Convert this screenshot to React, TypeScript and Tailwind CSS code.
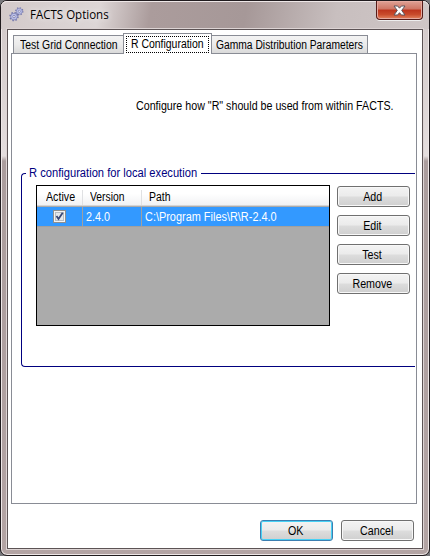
import React from "react";

function Label({ children, className = "" }: { children: React.ReactNode; className?: string }) {
  return <span className={`inline-block whitespace-pre ${className}`}>{children}</span>;
}

function Button({ children, primary = false }: { children: React.ReactNode; primary?: boolean }) {
  return (
    <button
      className={`flex h-[21px] w-[73px] items-center justify-center rounded-[3px] border bg-[linear-gradient(#f3f3f3_0%,#ebebeb_49%,#dddddd_51%,#cfcfcf_100%)] pr-[2px] ${
        primary
          ? "border-[#3c7fb1] shadow-[inset_0_0_0_1px_#48d1f5]"
          : "border-[#707070] shadow-[inset_0_0_0_1px_#f8f8f8]"
      }`}
    >
      <Label className="scale-x-[0.89]">{children}</Label>
    </button>
  );
}

function Gear({ x, y, s }: { x: number; y: number; s: number }) {
  return (
    <g transform={`translate(${x} ${y}) scale(${s})`}>
      <circle r="4.2" fill="none" stroke="#7276ac" strokeWidth="1.8" strokeDasharray="1.6 1.7" />
      <circle r="3.6" fill="#bcc0e8" stroke="#7276ac" strokeWidth="0.7" />
      <circle r="1.3" fill="#f1edf3" stroke="#666aa0" strokeWidth="0.7" />
    </g>
  );
}

export default function App() {
  return (
    <div className="h-[556px] w-[430px] overflow-hidden bg-[#77777b] font-['Liberation_Sans',Arial,sans-serif] text-[12px] leading-[14px] text-black">
      <div className="flex h-full flex-col rounded-[7px] border border-[#201b1e] bg-[linear-gradient(to_bottom,#d0c7c7_0px,#e4dddd_155px,#ab9d9d_160px,#b3a4a4_100%)] shadow-[inset_0_0_0_1px_#eee7e7]">
        <header className="flex h-[28px] shrink-0 justify-between rounded-t-[6px] bg-[linear-gradient(100deg,#d3caca_0%,#ddd6d6_23%,#ab9c9c_35%,#a69898_57%,#c8bfbf_78%,#cfc6c6_100%)] pl-[8px] pr-[6px] shadow-[inset_0_1px_0_#eee7e7]">
          <div className="flex items-start">
            <svg className="mt-[6px] h-[15px] w-[15px]" viewBox="0 0 15 15">
              <Gear x={10.3} y={4.3} s={0.82} />
              <Gear x={5} y={9.6} s={0.93} />
            </svg>
            <Label className="ml-[6px] mt-[6px] origin-left scale-x-[0.96] font-['Open_Sans','Noto_Sans',sans-serif] leading-[16px] [text-shadow:0_0_7px_#fff]">FACTS Options</Label>
          </div>
          <button className="flex h-[19px] w-[47px] items-center justify-center rounded-b-[4px] border border-t-0 border-[#551b18] bg-[linear-gradient(#dfa296_0%,#ce7564_45%,#bd341d_50%,#c94b2c_75%,#e38561_100%)] shadow-[inset_0_0_0_1px_#e6aaa0,0_1px_0_#eee]">
            <svg className="h-[11px] w-[13px]" viewBox="0 0 13 11">
              <path d="M1 1H4.6L6.5 3.2L8.4 1H12L8.7 5.4L12 10H8.4L6.5 7.7L4.6 10H1L4.3 5.4Z" fill="#fff" stroke="#5b565f" strokeWidth="1" />
            </svg>
          </button>
        </header>
        <main className="mx-[6px] mb-[6px] flex min-h-0 flex-1 flex-col border border-[#5c5355] bg-white pl-[3px] pr-[5px] pt-[3px] shadow-[0_0_0_1px_#ddd4d4]">
          <nav className="z-10 -mb-px flex h-[21px] items-end pl-[2px]">
            <div className="h-[19px] w-[111px] border border-[#898c95] bg-gradient-to-b from-[#f3f3f3] via-[#ebebeb] to-[#dadada] pl-[6px] pt-[2px]">
              <Label className="origin-left scale-x-[0.87]">Test Grid Connection</Label>
            </div>
            <div className="-ml-px h-[21px] w-[89px] border border-b-0 border-[#898c95] bg-white p-[2px]">
              <div className="h-[17px] w-[83px] border border-dotted border-black pl-[4px]">
                <Label className="origin-left scale-x-[0.87]">R Configuration</Label>
              </div>
            </div>
            <div className="-ml-px h-[19px] w-[157px] border border-[#898c95] bg-gradient-to-b from-[#f3f3f3] via-[#ebebeb] to-[#dadada] pl-[4px] pt-[2px]">
              <Label className="origin-left scale-x-[0.857]">Gamma Distribution Parameters</Label>
            </div>
          </nav>
          <section className="h-[451px] w-[406px] border border-[#898c95] pt-[45px]">
            <Label className="ml-[124px] origin-left scale-x-[0.89]">Configure how "R" should be used from within FACTS.</Label>
            <div className="relative ml-[9px] mt-[60px] h-[194px] w-[394px] rounded-l-[4px] border border-r-0 border-[#00007f]">
              <div className="absolute left-[4px] top-[-8px] w-[175px] bg-white pl-[3px] leading-[14px] text-[#00007f]">
                <Label className="origin-left scale-x-[0.93]">R configuration for local execution</Label>
              </div>
              <div className="flex gap-[7px] pl-[14px] pt-[11px]">
                <div className="h-[141px] w-[294px] border border-black bg-[#ababab]">
                  <div className="flex h-[20px] border-b border-[#d5d5d5] bg-gradient-to-b from-white from-40% to-[#f1f2f4] pt-[4px]">
                    <div className="w-[46px] border-r border-[#e0e1e3] pl-[9px]"><Label className="origin-left scale-x-[0.89]">Active</Label></div>
                    <div className="w-[59px] border-r border-[#e0e1e3] pl-[7px]"><Label className="origin-left scale-x-[0.86]">Version</Label></div>
                    <div className="pl-[7px]"><Label className="origin-left scale-x-[0.87]">Path</Label></div>
                  </div>
                  <div className="mt-px flex h-[20px] border-b border-[#a0a0a0] bg-[#3399ff] text-white">
                    <div className="flex w-[46px] justify-center border-r border-[#a0a0a0] pt-[3px]">
                      <svg className="h-[13px] w-[13px]" viewBox="0 0 13 13">
                        <rect x=".5" y=".5" width="12" height="12" fill="#f4f4f4" stroke="#8e8f8f" />
                        <rect x="2.5" y="2.5" width="8" height="8" fill="#e5e8eb" stroke="#b7bdc3" />
                        <path d="M3.5 6L5.5 9L9.7 2.7" fill="none" stroke="#394776" strokeWidth="1.8" />
                      </svg>
                    </div>
                    <div className="w-[59px] border-r border-[#a0a0a0] pl-[3px] pt-[3px]"><Label className="origin-left scale-x-[0.9]">2.4.0</Label></div>
                    <div className="pl-[3px] pt-[3px]"><Label className="origin-left scale-x-[0.91]">{"C:\\Program Files\\R\\R-2.4.0"}</Label></div>
                  </div>
                </div>
                <div className="flex flex-col gap-[8px] pt-px">
                  <Button>Add</Button>
                  <Button>Edit</Button>
                  <Button>Test</Button>
                  <Button>Remove</Button>
                </div>
              </div>
            </div>
          </section>
          <footer className="mt-[16px] flex justify-end gap-[8px] pr-[3px]">
            <Button primary>OK</Button>
            <Button>Cancel</Button>
          </footer>
        </main>
      </div>
    </div>
  );
}
